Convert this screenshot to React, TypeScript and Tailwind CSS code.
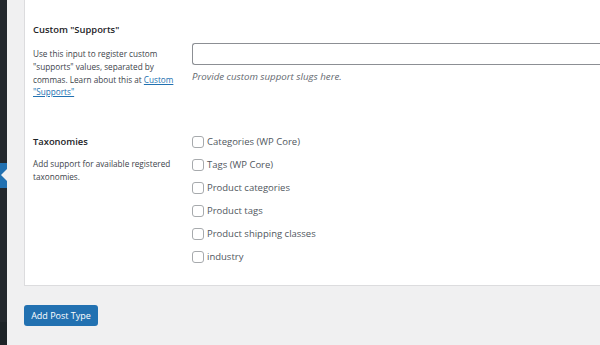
import React from "react";

const taxonomies = [
  "Categories (WP Core)",
  "Tags (WP Core)",
  "Product categories",
  "Product tags",
  "Product shipping classes",
  "industry",
];

export default function App() {
  return (
    <div
      className="flex h-[345px] w-[600px] overflow-hidden bg-[#f0f0f1]"
      style={{ fontFamily: '"Open Sans", "Noto Sans", sans-serif' }}
    >
      {/* admin sidebar strip */}
      <div className="flex w-[7px] shrink-0 flex-col bg-[#23282d]">
        <div className="h-[163px]" />
        <div className="relative h-[25px] bg-[#2271b1]">
          <div className="absolute right-0 top-[6px] h-0 w-0 border-y-[6px] border-r-[6px] border-y-transparent border-r-[#f0f0f1]" />
        </div>
        <div className="h-[134px]" />
        <div className="flex-1 bg-[#1d2327]" />
      </div>

      {/* main */}
      <div className="flex flex-1 flex-col pl-[17px]">
        <div className="-mt-px h-[287px] border border-r-0 border-[#dcdcde] bg-white pl-[8px]">
          {/* Custom supports */}
          <div className="flex pt-[23px]">
            <div className="w-[159px] shrink-0 pr-[10px]">
              <div className="text-[9.4px] font-semibold leading-[13px] text-[#1d2327]">
                Custom "Supports"
              </div>
              <p className="mt-[12px] text-[8.2px] leading-[12.8px] text-[#3c434a]">
                Use this input to register custom "supports" values, separated by commas. Learn about this at{" "}
                <a href="#" className="text-[#2271b1] underline">
                  Custom "Supports"
                </a>
              </p>
            </div>
            <div className="flex-1 pt-[20px]">
              <div className="h-[22px] rounded-l-[3px] border border-r-0 border-[#8c8f94] bg-white" />
              <p className="mt-[6px] text-[9.7px] italic leading-[12px] text-[#646970]">
                Provide custom support slugs here.
              </p>
            </div>
          </div>

          {/* Taxonomies */}
          <div className="mt-[36px] flex">
            <div className="w-[159px] shrink-0 pr-[10px]">
              <div className="text-[9.4px] font-semibold leading-[13px] text-[#1d2327]">
                Taxonomies
              </div>
              <p className="mt-[10px] text-[8.2px] leading-[12.8px] text-[#3c434a]">
                Add support for available registered taxonomies.
              </p>
            </div>
            <div className="flex flex-1 flex-col gap-[11px] pt-px">
              {taxonomies.map((t) => (
                <label key={t} className="flex items-center gap-[3px] text-[9.5px] leading-[12px] text-[#50575e]">
                  <span className="h-[12px] w-[12px] shrink-0 rounded-[3px] border border-[#a7aaad] bg-white" />
                  {t}
                </label>
              ))}
            </div>
          </div>
        </div>

        <div className="pt-[15px]">
          <button className="h-[21px] w-[74px] rounded-[3px] bg-[#2271b1] text-[9px] leading-[21px] text-white">
            Add Post Type
          </button>
        </div>
      </div>
    </div>
  );
}
